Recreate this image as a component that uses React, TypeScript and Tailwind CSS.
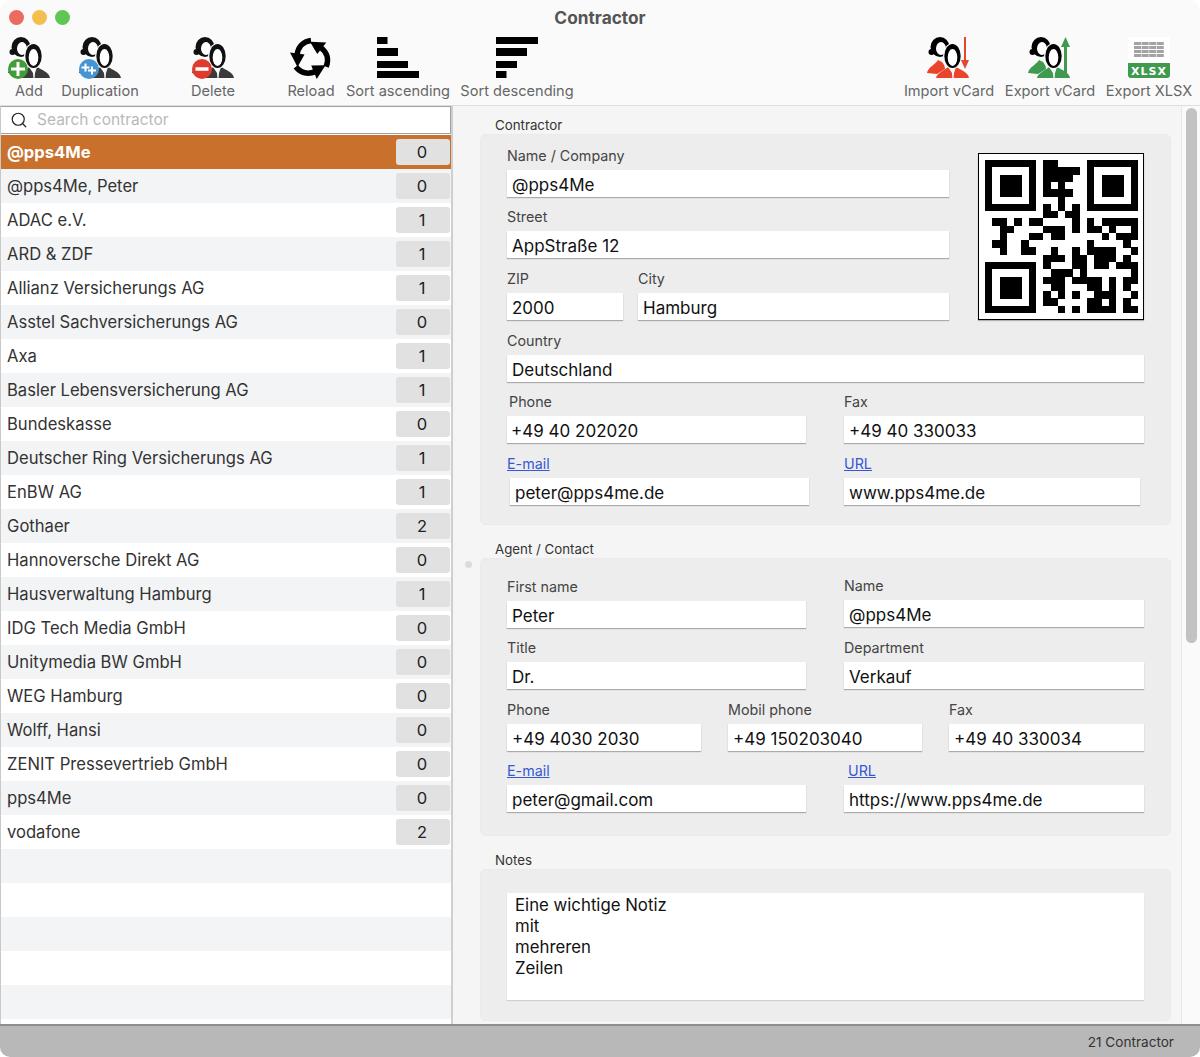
import { Search } from "lucide-react";

const contractors: [string, number][] = [
  ["@pps4Me", 0],
  ["@pps4Me, Peter", 0],
  ["ADAC e.V.", 1],
  ["ARD & ZDF", 1],
  ["Allianz Versicherungs AG", 1],
  ["Asstel Sachversicherungs AG", 0],
  ["Axa", 1],
  ["Basler Lebensversicherung AG", 1],
  ["Bundeskasse", 0],
  ["Deutscher Ring Versicherungs AG", 1],
  ["EnBW AG", 1],
  ["Gothaer", 2],
  ["Hannoversche Direkt AG", 0],
  ["Hausverwaltung Hamburg", 1],
  ["IDG Tech Media GmbH", 0],
  ["Unitymedia BW GmbH", 0],
  ["WEG Hamburg", 0],
  ["Wolff, Hansi", 0],
  ["ZENIT Pressevertrieb GmbH", 0],
  ["pps4Me", 0],
  ["vodafone", 2],
];

const qrRows = [
  "111111101100001111111",
  "100000101111101000001",
  "101110101111001011101",
  "101110101010001011101",
  "101110101111001011101",
  "100000100010001000001",
  "111111101010101111111",
  "000000001101100000000",
  "011010110000101011111",
  "001100001110101101001",
  "001000110110000010111",
  "011001000000001000010",
  "001001100100101111001",
  "000000001110110111010",
  "111111101000110110111",
  "100000100111010000001",
  "101110101110111101011",
  "101110100110001101010",
  "101110101010100111001",
  "100000101100001101010",
  "111111100010101111011",
];

function People({ head = "#111", body = "#3a3a3a" }: { head?: string; body?: string }) {
  return (
    <>
      <path d="M0 36C1 30 8 28 11 23L15 25C17 27 18 30 18 32L10 37Z" fill={body} />
      <ellipse cx="13" cy="10" rx="9.5" ry="10" fill={head} />
      <circle cx="4.5" cy="15" r="3" fill={head} />
      <ellipse cx="14" cy="11.5" rx="5" ry="6.5" fill="#fff" />
      <path d="M9 41C10 36 16 34 21 30L25 36L25.4 41Z" fill={body} />
      <path d="M42 41C41 35 34 33 29 30L27 36L26.6 41Z" fill={body} />
      <ellipse cx="25.5" cy="19" rx="9.5" ry="13" fill="#fafafa" />
      <ellipse cx="25.5" cy="19" rx="8.2" ry="12" fill={head} />
      <ellipse cx="25.5" cy="20.5" rx="4.8" ry="8.5" fill="#fff" />
    </>
  );
}

function PeopleBadge({ color, kind }: { color: string; kind: "add" | "dup" | "del" }) {
  return (
    <svg width="42" height="42" viewBox="0 0 42 42">
      <People />
      <circle cx="10" cy="32" r="10" fill={color} />
      {kind === "add" && <path d="M10 25V39M3 32H17" stroke="#fff" strokeWidth="3" />}
      {kind === "dup" && <path d="M6.5 26.5V34.5M2.5 30.5H10.5M13 29.5V37.5M9 33.5H17" stroke="#fff" strokeWidth="2" />}
      {kind === "del" && <path d="M3.5 32H16.5" stroke="#fff" strokeWidth="3.5" />}
    </svg>
  );
}

function PeopleArrow({ color, up }: { color: string; up?: boolean }) {
  return (
    <svg width="44" height="42" viewBox="0 0 44 42">
      <People head="#000" body={color} />
      {up ? (
        <>
          <path d="M37.5 41V8" stroke={color} strokeWidth="3" />
          <path d="M33 10L37.5 0L42 10Z" fill={color} />
        </>
      ) : (
        <>
          <path d="M38 0V25" stroke={color} strokeWidth="2" />
          <path d="M34 23H42L38 32Z" fill={color} />
        </>
      )}
    </svg>
  );
}

function ReloadIcon() {
  return (
    <svg width="42" height="42" viewBox="0 0 42 42">
      {[0, 120, -120].map((r) => (
        <g key={r} transform={`rotate(${r} 21 21)`}>
          <path d="M21 3.5C13 4.5 8 10 7 18" fill="none" stroke="#000" strokeWidth="5.5" />
          <path d="M0 15.5L14.5 17.5L7.5 30Z" fill="#000" />
        </g>
      ))}
    </svg>
  );
}

function SortIcon({ desc }: { desc?: boolean }) {
  const widths = desc ? [42, 31, 21, 10.5] : [10.5, 21, 31, 42];
  const ys = [0, 11, 24, 34];
  const hs = [7, 8, 7, 7];
  return (
    <svg width="42" height="42" viewBox="0 0 42 42">
      {widths.map((w, i) => (
        <rect key={i} x="0" y={ys[i]} width={w} height={hs[i]} fill="#000" />
      ))}
    </svg>
  );
}

function XlsxIcon() {
  const cols = [6, 13.6, 21.2, 28.8];
  const rows = [5, 9, 13, 17];
  return (
    <svg width="42" height="42" viewBox="0 0 42 42">
      <rect width="42" height="42" fill="#fff" />
      {rows.map((y) =>
        cols.map((x) => <rect key={`${x}-${y}`} x={x} y={y} width="7" height="3" fill="#a3a3a3" />)
      )}
      <path d="M0 26H42V38Q42 41 39 41H3Q0 41 0 38Z" fill="#3f9a4f" />
      <text x="21" y="38" textAnchor="middle" fill="#fff" fontSize="11" fontWeight="700" letterSpacing="1" fontFamily="'DejaVu Sans', sans-serif">
        XLSX
      </text>
    </svg>
  );
}

function QrCode() {
  return (
    <svg width="153" height="153" viewBox="0 0 21 21" shapeRendering="crispEdges">
      {qrRows.map((row, y) =>
        row.split("").map((c, x) => (c === "1" ? <rect key={`${x}-${y}`} x={x} y={y} width="1.02" height="1.02" fill="#000" /> : null))
      )}
    </svg>
  );
}

function ToolButton({ label, icon, className }: { label: string; icon: React.ReactNode; className: string }) {
  return (
    <div className={`flex flex-col items-center ${className}`}>
      <div className="flex h-[44px] items-start justify-center">{icon}</div>
      <div className="h-[20px] whitespace-nowrap text-[14.6px] leading-[20px] text-[#666]">{label}</div>
    </div>
  );
}

function Field({
  label,
  value,
  className = "",
  link,
  labelClass = "",
  inputClass = "",
}: {
  label: string;
  value: string;
  className?: string;
  link?: boolean;
  labelClass?: string;
  inputClass?: string;
}) {
  return (
    <div className={className}>
      <div
        className={`mb-[4px] h-[20px] text-[14.3px] leading-[20px] ${
          link ? "text-[#3558d4] underline" : "text-[#444]"
        } ${labelClass}`}
      >
        {label}
      </div>
      <div
        className={`flex h-[27px] items-center whitespace-nowrap bg-white pl-[5px] pt-[5px] text-[17px] text-[#111] shadow-[0_1px_1px_rgba(0,0,0,0.28)] ${inputClass}`}
      >
        {value}
      </div>
    </div>
  );
}

function GroupLabel({ children }: { children: string }) {
  return <div className="h-[18px] pl-[15px] text-[13.3px] leading-[18px] text-[#333]">{children}</div>;
}

export default function App() {
  return (
    <div className="h-[1057px] w-[1200px] overflow-hidden bg-white [font-family:Inter,sans-serif]">
      <div className="flex h-full flex-col overflow-hidden rounded-[10px]">
        <header className="h-[106px] shrink-0 border-b border-[#dedede] bg-[#fafafa]">
          <div className="grid h-[34px] grid-cols-[1fr_auto_1fr] items-center">
            <div className="flex gap-[8px] pl-[9px]">
              <div className="h-[15px] w-[15px] rounded-full bg-[#ed6a5e]" />
              <div className="h-[15px] w-[15px] rounded-full bg-[#f4bf4f]" />
              <div className="h-[15px] w-[15px] rounded-full bg-[#61c554]" />
            </div>
            <div className="pt-[2px] text-[17.3px] font-bold text-[#555]">Contractor</div>
            <div />
          </div>
          <div className="flex pt-[3px]">
            <ToolButton className="w-[58px]" label="Add" icon={<PeopleBadge color="#3f9d3a" kind="add" />} />
            <ToolButton className="w-[84px]" label="Duplication" icon={<PeopleBadge color="#4595d3" kind="dup" />} />
            <ToolButton className="ml-[38px] w-[66px]" label="Delete" icon={<PeopleBadge color="#df3a2c" kind="del" />} />
            <ToolButton className="ml-[34px] w-[62px]" label="Reload" icon={<ReloadIcon />} />
            <ToolButton className="w-[112px]" label="Sort ascending" icon={<SortIcon />} />
            <ToolButton className="ml-[2px] w-[122px]" label="Sort descending" icon={<SortIcon desc />} />
            <ToolButton className="ml-auto w-[98px]" label="Import vCard" icon={<PeopleArrow color="#e8452c" />} />
            <ToolButton className="ml-[4px] w-[96px]" label="Export vCard" icon={<PeopleArrow color="#3f9a4f" up />} />
            <ToolButton className="ml-[6px] mr-[6px] w-[90px]" label="Export XLSX" icon={<XlsxIcon />} />
          </div>
        </header>

        <div className="flex min-h-0 flex-1">
          <aside className="flex w-[453px] shrink-0 flex-col overflow-hidden border-l border-r-2 border-l-[#c9c9c9] border-r-[#cfcfcf] bg-white">
            <div className="flex h-[28px] shrink-0 items-center border-y border-r border-[#a2a2a2] bg-white pl-[9px]">
              <Search size={18} strokeWidth={1.6} className="text-[#222]" />
              <span className="ml-[9px] text-[15.5px] text-[#b9b9b9]">Search contractor</span>
            </div>
            <div className="mt-[1px]">
              {contractors.map(([name, count], i) => (
                <div
                  key={name}
                  className={`flex h-[34px] items-center justify-between pl-[6px] pr-[1px] ${
                    i === 0 ? "bg-[#c8702c]" : i % 2 === 1 ? "bg-[#f3f4f5]" : "bg-white"
                  }`}
                >
                  <span className={`text-[16.6px] ${i === 0 ? "font-bold text-white" : "text-[#333]"}`}>{name}</span>
                  <span className="flex h-[26px] w-[54px] items-center justify-center rounded-[3px] bg-[#e1e1e1] pr-[2px] text-[16.5px] text-[#222]">
                    {count}
                  </span>
                </div>
              ))}
              {[0, 1, 2, 3, 4, 5].map((i) => (
                <div key={i} className={`h-[34px] ${i % 2 === 0 ? "bg-[#f3f4f5]" : "bg-white"}`} />
              ))}
            </div>
          </aside>

          <main className="min-w-0 flex-1 overflow-hidden bg-[#f5f5f5] pl-[27px] pr-[10px] pt-[10px]">
            <GroupLabel>Contractor</GroupLabel>
            <section className="rounded-[6px] border border-[#eaeaea] bg-[#ededed] pb-[19px] pl-[26px] pr-[26px] pt-[11px]">
              <div className="flex">
                <div className="w-[442px]">
                  <Field label="Name / Company" value="@pps4Me" />
                  <Field className="mt-[10px]" label="Street" value="AppStraße 12" />
                  <div className="mt-[11px] flex">
                    <Field className="w-[116px]" label="ZIP" value="2000" />
                    <Field className="ml-[15px] w-[311px]" label="City" value="Hamburg" />
                  </div>
                </div>
                <div className="ml-[29px] mt-[7px] flex h-[167px] w-[167px] items-center justify-center border border-black bg-white shadow-[0_1px_1px_rgba(0,0,0,0.25)]">
                  <QrCode />
                </div>
              </div>
              <Field className="mt-[11px]" label="Country" value="Deutschland" />
              <div className="mt-[10px] flex">
                <Field className="w-[299px]" labelClass="pl-[2px]" label="Phone" value="+49 40 202020" inputClass="!pl-[4px]" />
                <Field className="ml-[38px] w-[300px]" label="Fax" value="+49 40 330033" />
              </div>
              <div className="mt-[11px] flex">
                <Field className="ml-[3px] w-[299px]" labelClass="-ml-[3px]" link label="E-mail" value="peter@pps4me.de" />
                <Field className="ml-[35px] w-[296px]" link label="URL" value="www.pps4me.de" />
              </div>
            </section>

            <div className="mt-[15px]">
              <GroupLabel>Agent / Contact</GroupLabel>
            </div>
            <section className="relative rounded-[6px] border border-[#eaeaea] bg-[#ededed] pb-[23px] pl-[26px] pr-[26px] pt-[17px]">
              <div className="absolute -left-[16px] top-[2px] h-[7px] w-[7px] rounded-full bg-[#dcdcdc]" />
              <div className="flex">
                <Field className="mt-[1px] w-[299px]" label="First name" value="Peter" />
                <Field className="ml-[38px] w-[300px]" label="Name" value="@pps4Me" />
              </div>
              <div className="mt-[10px] flex">
                <Field className="w-[299px]" label="Title" value="Dr." />
                <Field className="ml-[38px] w-[300px]" label="Department" value="Verkauf" />
              </div>
              <div className="mt-[11px] flex">
                <Field className="w-[194px]" label="Phone" value="+49 4030 2030" />
                <Field className="ml-[27px] w-[194px]" label="Mobil phone" value="+49 150203040" />
                <Field className="ml-[27px] w-[195px]" label="Fax" value="+49 40 330034" />
              </div>
              <div className="mt-[10px] flex">
                <Field className="w-[299px]" link label="E-mail" value="peter@gmail.com" />
                <Field className="ml-[38px] w-[300px]" labelClass="pl-[4px]" link label="URL" value="https://www.pps4me.de" />
              </div>
            </section>

            <div className="mt-[15px]">
              <GroupLabel>Notes</GroupLabel>
            </div>
            <section className="rounded-[6px] border border-[#eaeaea] bg-[#ededed] pb-[20px] pl-[26px] pr-[26px] pt-[23px]">
              <div className="h-[107px] bg-white pl-[8px] pt-[2px] text-[16.8px] leading-[21px] text-[#111] shadow-[0_1px_1px_rgba(0,0,0,0.12)]">
                <div>Eine wichtige Notiz</div>
                <div>mit</div>
                <div>mehreren</div>
                <div>Zeilen</div>
              </div>
            </section>
          </main>

          <div className="flex w-[19px] shrink-0 justify-center border-l border-[#e8e8e8] bg-[#fafafa] pt-[2px]">
            <div className="h-[535px] w-[11px] rounded-full bg-[#c2c2c2]" />
          </div>
        </div>

        <footer className="flex h-[33px] shrink-0 items-center justify-end border-t-2 border-[#8e8e8e] bg-[#b8b8b8] pr-[26px] pt-[2px] text-[13.6px] text-[#333]">
          21 Contractor
        </footer>
      </div>
    </div>
  );
}
